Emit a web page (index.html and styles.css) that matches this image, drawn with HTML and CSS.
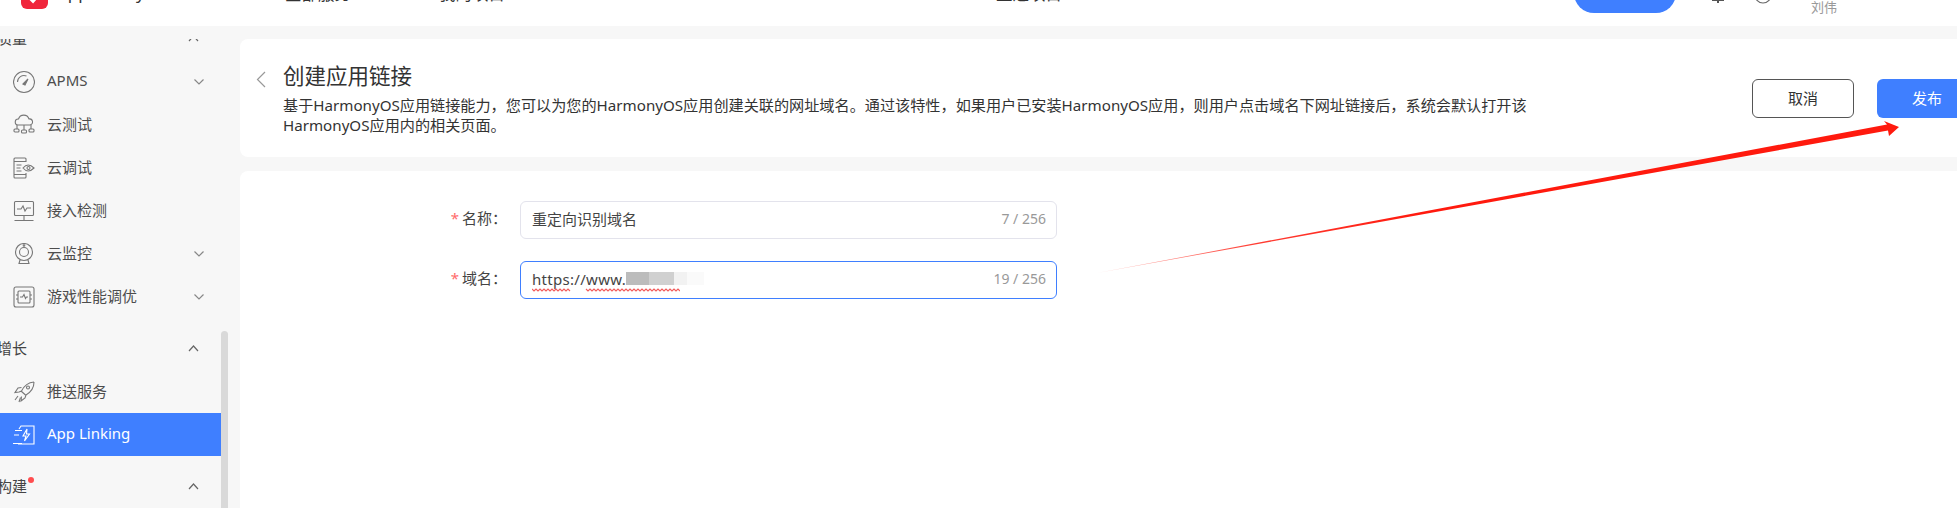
FILE: index.html
```html
<!DOCTYPE html>
<html lang="zh-CN">
<head>
    <meta charset="UTF-8">
    <title>创建应用链接</title>
    <link rel="stylesheet" href="styles.css">
</head>
<body>
    <header class="topbar">
        <div class="logo">
            <svg width="27" height="27" viewBox="0 0 27 27"><rect width="27" height="27" rx="6" fill="#f0263c"/><path d="M8 15l4 4 7-8" fill="none" stroke="#fff" stroke-width="3.4"/></svg>
        </div>
        <div class="brand">AppGallery <span class="brand-sub">Connect</span></div>
        <a class="top-link link-all">全部服务</a>
        <a class="top-link link-mine">我的项目</a>
        <a class="top-link link-pick">重选项目</a>
        <div class="top-right">
            <button class="pill">开通服务</button>
            <svg class="top-icon bell" width="18" height="18" viewBox="0 0 18 18"><path d="M3 14h12M9 14v3" stroke="#555" stroke-width="2" fill="none"/><path d="M4 14V6h10v8z" fill="#555"/></svg>
            <svg class="top-icon help" width="18" height="18" viewBox="0 0 18 18"><circle cx="9" cy="9" r="8" stroke="#666" fill="none" stroke-width="1.2"/><circle cx="9" cy="12.5" r="1" fill="#666"/></svg>
            <span class="user">刘伟</span>
        </div>
    </header>

    <div class="layout">
        <aside class="sidebar">
            <nav class="side-scroll">
                <div class="section first"><span class="section-name">质量</span><svg class="chev-up" width="11" height="7" viewBox="0 0 11 7"><path d="M1 6l4.500-5 4.500 5"/></svg></div>
                <a class="item">
                    <svg class="icon" width="22" height="24" viewBox="0 0 22 24"><circle cx="11" cy="12" r="10.500"/><path d="M4.500 12a6.500 6.500 0 0 1 9-6"/><path d="M10 14l5-5-3 6z" fill="#777"/></svg>
                    <span class="item-name">APMS</span>
                    <svg class="chev-down" width="10" height="6" viewBox="0 0 10 6"><path d="M.5.500L5 5 9.500.500"/></svg>
                </a>
                <a class="item">
                    <svg class="icon" width="22" height="22" viewBox="0 0 22 22"><path d="M5 11a3 3 0 0 1 .5-6 5.500 5.500 0 0 1 10.500 0 3 3 0 0 1 1 6z"/><path d="M4 11v4M11 11v5M18 11v4"/><rect x="1" y="15" width="5" height="3" rx="1"/><rect x="8.500" y="16" width="5" height="3" rx="1"/><rect x="16" y="15" width="5" height="3" rx="1"/></svg>
                    <span class="item-name">云测试</span>
                </a>
                <a class="item">
                    <svg class="icon" width="22" height="22" viewBox="0 0 22 22"><path d="M13 5V2a1 1 0 0 0-1-1H2a1 1 0 0 0-1 1v18a1 1 0 0 0 1 1h10a1 1 0 0 0 1-1v-4M1 4.500h12M1 17.500h12M3.500 8h5M3.500 11h4M3.500 14h5"/><path d="M10 11q5-6 11 0-6 6-11 0z"/><circle cx="15.500" cy="11" r="1.500"/></svg>
                    <span class="item-name">云调试</span>
                </a>
                <a class="item">
                    <svg class="icon" width="22" height="22" viewBox="0 0 22 22"><rect x="1.500" y="1.500" width="19" height="14" rx="1"/><path d="M4 9h4l2-3 2 5 2-3h4M11 16v4M1.500 20.500h19"/></svg>
                    <span class="item-name">接入检测</span>
                </a>
                <a class="item">
                    <svg class="icon" width="22" height="22" viewBox="0 0 22 22"><circle cx="11" cy="9" r="8.500"/><circle cx="11" cy="9" r="4.500"/><circle cx="11" cy="2.500" r=".8"/><path d="M7 17l-1 3.500h10L15 17"/></svg>
                    <span class="item-name">云监控</span>
                    <svg class="chev-down" width="10" height="6" viewBox="0 0 10 6"><path d="M.5.500L5 5 9.500.500"/></svg>
                </a>
                <a class="item">
                    <svg class="icon" width="22" height="22" viewBox="0 0 22 22"><rect x="1" y="1" width="20" height="20" rx="2"/><path d="M5 6a1 1 0 0 1 1-1h10a1 1 0 0 1 1 1v10a1 1 0 0 1-1 1H6a1 1 0 0 1-1-1zM3 9h2M3 13h2M17 9h2M17 13h2M7 11h2.500l1.500-2.500 1.500 4 1-1.500h1.500"/></svg>
                    <span class="item-name">游戏性能调优</span>
                    <svg class="chev-down" width="10" height="6" viewBox="0 0 10 6"><path d="M.5.500L5 5 9.500.500"/></svg>
                </a>
                <div class="section"><span class="section-name">增长</span><svg class="chev-up" width="11" height="7" viewBox="0 0 11 7"><path d="M1 6l4.500-5 4.500 5"/></svg></div>
                <a class="item">
                    <svg class="icon" width="22" height="22" viewBox="0 0 22 22"><path d="M21 1c-6 .5-10 4-12.500 9L6 11l-4 .5 3-4.500 3.500-.5M21 1c0 6-3 10-8 13l-1 3-4 3 .5-4.500M8 10l4.500 4"/><circle cx="15" cy="6.500" r="1.500"/><path d="M5 15l-3 4M7.500 16.500L6 21"/></svg>
                    <span class="item-name">推送服务</span>
                </a>
                <a class="item active">
                    <svg class="icon" width="22" height="22" viewBox="0 0 22 22"><path d="M6 5l2-3h13v18H5M2 6.500h7M1 11h5M0 19.500h9"/><path d="M14 5l-4 7h3l-1.500 5 5-7h-3z"/></svg>
                    <span class="item-name">App Linking</span>
                </a>
                <div class="section"><span class="section-name">构建</span><i class="dot"></i><svg class="chev-up" width="11" height="7" viewBox="0 0 11 7"><path d="M1 6l4.500-5 4.500 5"/></svg></div>
            </nav>
            <div class="scrollbar"></div>
        </aside>

        <main class="main">
            <section class="card head-card">
                <svg class="back" width="10" height="17" viewBox="0 0 10 17"><path d="M9 1L1.500 8.500 9 16"/></svg>
                <div class="head-text">
                    <h1>创建应用链接</h1>
                    <p>基于HarmonyOS应用链接能力，您可以为您的HarmonyOS应用创建关联的网址域名。通过该特性，如果用户已安装HarmonyOS应用，则用户点击域名下网址链接后，系统会默认打开该HarmonyOS应用内的相关页面。</p>
                </div>
                <div class="head-actions">
                    <button class="btn btn-cancel">取消</button>
                    <button class="btn btn-primary">发布</button>
                </div>
            </section>

            <section class="card form-card">
                <div class="form-row">
                    <label class="form-label"><em>*</em>名称：</label>
                    <div class="field">
                        <span class="field-value">重定向识别域名</span>
                        <span class="count">7 / 256</span>
                    </div>
                </div>
                <div class="form-row">
                    <label class="form-label"><em>*</em>域名：</label>
                    <div class="field focused">
                        <span class="field-value"><span class="url">https://www.</span><span class="blur b1"></span><span class="blur b2"></span><span class="blur b3"></span><span class="blur b4"></span></span>
                        <span class="count">19 / 256</span>
                        <svg class="squiggle" width="148" height="4" viewBox="0 0 148 4"><path d="M0 1l2 2 2-2 2 2 2-2 2 2 2-2 2 2 2-2 2 2 2-2 2 2 2-2 2 2 2-2 2 2 2-2 2 2 2-2 2 2M54 1l2 2 2-2 2 2 2-2 2 2 2-2 2 2 2-2 2 2 2-2 2 2 2-2 2 2 2-2 2 2 2-2 2 2 2-2 2 2 2-2 2 2 2-2 2 2 2-2 2 2 2-2 2 2 2-2 2 2 2-2 2 2 2-2 2 2 2-2 2 2 2-2 2 2 2-2 2 2 2-2 2 2 2-2 2 2 2-2 2 2 2-2 2 2"/></svg>
                    </div>
                </div>
            </section>
        </main>
    </div>

    <!-- 标注箭头 -->
    <svg class="arrow" width="1957" height="508" viewBox="0 0 1957 508">
        <defs>
            <linearGradient id="fade" x1="1097" y1="273" x2="1898" y2="127" gradientUnits="userSpaceOnUse">
                <stop offset="0" stop-color="#ff1a0e" stop-opacity=".3"/>
                <stop offset=".2" stop-color="#ff1a0e" stop-opacity=".85"/>
                <stop offset=".4" stop-color="#ff1a0e"/>
            </linearGradient>
        </defs>
        <path d="M1097 273L1887 124.500 1884 121 1899 127 1889 136 1888 130.500z" fill="url(#fade)"/>
    </svg>
</body>
</html>
```

FILE: styles.css
```css
* {
    box-sizing: border-box;
}
html, body {
    margin: 0;
    height: 100%;
    overflow: hidden;
}
body {
    font-family: "Noto Sans", "Noto Sans CJK SC", sans-serif;
    font-size: 15px;
    color: #333;
    background: #f7f7f7;
}
.topbar {
    display: flex;
    align-items: flex-end;
    height: 26px;
    background: #fff;
}
.logo {
    margin: 0 0 17px 21px;
    height: 27px;
}
.brand {
    margin: 0 0 21px 9px;
    width: 130px;
    font-size: 17px;
    line-height: 24px;
    white-space: nowrap;
}
.brand-sub {
    color: #888;
}
.top-link {
    flex: none;
    margin-bottom: 21px;
    font-size: 16.500px;
    line-height: 22px;
    white-space: nowrap;
}
.link-all {
    margin-left: 98px;
}
.link-mine {
    margin-left: 88px;
}
.link-pick {
    margin-left: 491px;
}
.top-right {
    display: flex;
    align-items: flex-end;
    margin-left: 512px;
}
.pill {
    width: 102px;
    height: 40px;
    margin-bottom: 13px;
    padding-bottom: 8px;
    border: none;
    border-radius: 20px;
    background: #3f7fff;
    color: #fff;
    font: inherit;
}
.top-icon {
    flex: none;
    margin-bottom: 22px;
}
.bell {
    margin-left: 33px;
}
.help {
    margin-left: 27px;
}
.user {
    margin: 0 0 11px 39px;
    line-height: 15px;
    font-size: 13px;
    color: #999;
}
.layout {
    display: flex;
    height: 482px;
    overflow: hidden;
}
.sidebar {
    position: relative;
    flex: none;
    width: 222px;
    margin-right: 18px;
    padding-top: 13px;
}
.side-scroll {
    width: 221px;
    height: 469px;
    overflow: hidden;
}
.section, .item {
    display: flex;
    align-items: center;
    height: 43px;
    color: #4d4d4d;
}
.item-name, .section-name {
    margin-top: -3px;
}
.section {
    margin-top: 9px;
    padding-right: 22px;
    color: #444;
}
.section.first {
    margin-top: -22px;
}
.section-name {
    margin-left: -3px;
}
.dot {
    width: 6px;
    height: 6px;
    margin: -14px 0 0 1px;
    border-radius: 50%;
    background: #ff4d4f;
}
.chev-up, .chev-down {
    margin-left: auto;
    fill: none;
    stroke: #666;
    stroke-width: 1.200;
}
.chev-down {
    margin-right: 17px;
    stroke: #888;
}
.icon {
    flex: none;
    margin: 0 12px 0 13px;
    fill: none;
    stroke: #777;
    stroke-width: 1.100;
}
.item.active {
    background: #3f7fff;
    color: #fff;
}
.item.active .icon {
    stroke: #fff;
}
.scrollbar {
    position: absolute;
    left: 221px;
    top: 305px;
    width: 7px;
    height: 190px;
    border-radius: 4px;
    background: #d9d9d9;
}
.main {
    flex: 1;
    min-width: 0;
    padding-top: 13px;
}
.card {
    background: #fff;
    border-radius: 8px 0 0 8px;
}
.head-card {
    display: flex;
    align-items: flex-start;
    height: 118px;
    margin-bottom: 14px;
    padding: 32px 0 0 16px;
}
.back {
    flex: none;
    margin: 0 17px 0 0;
    fill: none;
    stroke: #999;
    stroke-width: 1.200;
}
.head-text {
    flex: none;
    width: 1252px;
    margin-top: -13px;
}
.head-text h1 {
    margin: 0;
    font-size: 21.500px;
    font-weight: 400;
    line-height: 36px;
}
.head-text p {
    margin: 1px 0 0;
    font-size: 15.150px;
    line-height: 20px;
}
.head-actions {
    display: flex;
    flex: none;
    gap: 23px;
    margin: 8px 0 0 217px;
}
.btn {
    width: 102px;
    height: 39px;
    border-radius: 6px;
    padding-bottom: 3px;
    font: inherit;
}
.btn-cancel {
    border: 1px solid #555;
    background: #fff;
    color: #333;
}
.btn-primary {
    flex: none;
    width: 100px;
    border: none;
    background: #3f7fff;
    color: #fff;
}
.form-card {
    height: 340px;
    padding-top: 30px;
    border-radius: 8px 0 0 0;
}
.form-row {
    display: flex;
    align-items: center;
    margin-bottom: 22px;
}
.form-label {
    flex: none;
    width: 280px;
    padding: 0 13px 5px 0;
    text-align: right;
    color: #444;
}
.form-label em {
    margin-right: 3px;
    color: #ff6b6b;
    font-style: normal;
}
.field {
    position: relative;
    display: flex;
    justify-content: space-between;
    align-items: center;
    width: 537px;
    height: 38px;
    padding: 0 10px 3px 11px;
    border: 1px solid #e3e3ec;
    border-radius: 6px;
}
.field.focused {
    border-color: #3f7fff;
}
.field-value {
    display: flex;
    align-items: center;
    color: #444;
}
.url {
    letter-spacing: .3px;
}
.count {
    font-size: 14px;
    color: #999;
}
.blur {
    display: inline-block;
    height: 13px;
}
.b1 {
    width: 23px;
    background: #bcbcbc;
}
.b2 {
    width: 25px;
    background: #d0d0d0;
}
.b3 {
    width: 13px;
    background: #f2f2f2;
}
.b4 {
    width: 17px;
    background: #fafafa;
}
.squiggle {
    position: absolute;
    left: 11px;
    top: 26px;
    fill: none;
    stroke: #f25c5c;
    stroke-width: 1.100;
}
.arrow {
    position: absolute;
    left: 0;
    top: 0;
    pointer-events: none;
}
```
